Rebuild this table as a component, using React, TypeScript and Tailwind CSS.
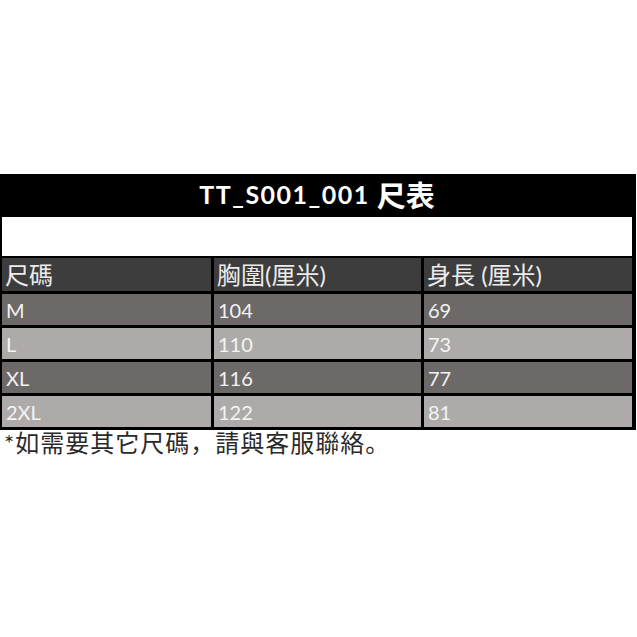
import React from "react";

const rows = [
  { s: "M", c: "104", l: "69", dark: true },
  { s: "L", c: "110", l: "73", dark: false },
  { s: "XL", c: "116", l: "77", dark: true },
  { s: "2XL", c: "122", l: "81", dark: false },
];

const latin = { fontFamily: "Lato, 'Noto Sans CJK TC', sans-serif" };

export default function App() {
  return (
    <div className="w-[637px] h-[637px] bg-white overflow-hidden">
      <div className="h-[174px]" />
      <div className="w-[636px] bg-black pl-[2px] pr-[4px] pb-[3px]">
        <div className="h-[43px] flex items-center justify-center text-white font-bold pb-[2px]">
          <span className="text-[25px] tracking-[1.5px]" style={latin}>TT_S001_001</span>
          <span className="text-[29px] ml-[7px]" style={{ fontFamily: "'Noto Sans CJK TC', sans-serif" }}>尺表</span>
        </div>
        <div className="h-[39px] bg-white" />
        <div className="grid grid-cols-[209px_207px_208px] gap-[3px] mt-[2px]">
          {["尺碼", "胸圍(厘米)", "身長 (厘米)"].map((h) => (
            <div
              key={h}
              className="h-[33px] bg-[#3e3d3d] text-[#ececec] text-[24px] flex items-center pl-[3px] leading-none"
              style={latin}
            >
              {h}
            </div>
          ))}
          {rows.map((r) =>
            [r.s, r.c, r.l].map((v, i) => (
              <div
                key={r.s + i}
                className={`h-[31px] flex items-center pt-[1px] pl-[4px] text-[20px] leading-none ${
                  r.dark ? "bg-[#6c6968] text-[#f2f2f2]" : "bg-[#aeaaa9] text-[#f4f4f4]"
                }`}
                style={latin}
              >
                {v}
              </div>
            ))
          )}
        </div>
      </div>
      <div
        className="pl-[4px] text-[24px] tracking-[1px] text-[#2a2a2a] leading-[26px]"
        style={{ fontFamily: "Lato, 'Noto Sans CJK JP', sans-serif" }}
      >
        *如需要其它尺碼，請與客服聯絡。
      </div>
    </div>
  );
}
